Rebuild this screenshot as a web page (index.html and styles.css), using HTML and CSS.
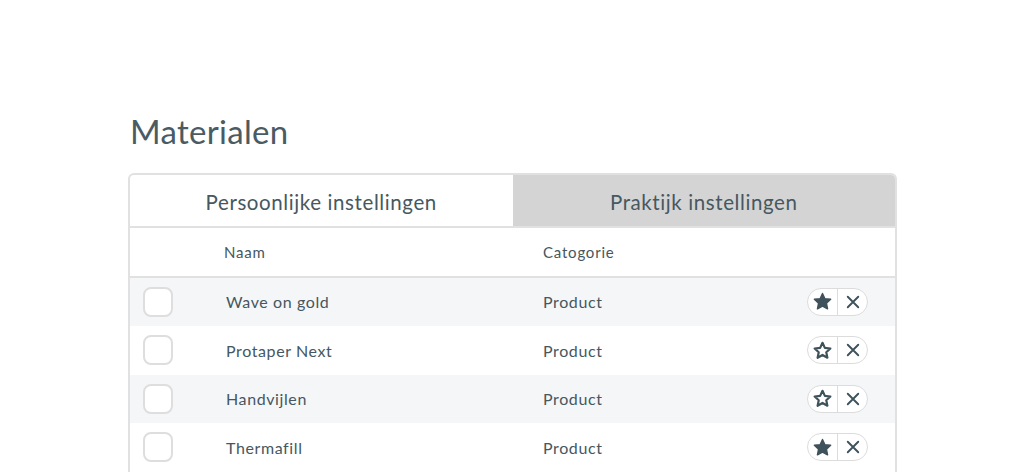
FILE: index.html
```html
<!DOCTYPE html>
<html>
<head>
<meta charset="utf-8">
<link rel="stylesheet" href="styles.css">
</head>
<body>
<div class="page">
  <h1 class="title">Materialen</h1>
  <div class="card">
    <div class="tabs">
      <div class="tab active">Persoonlijke instellingen</div>
      <div class="tab">Praktijk instellingen</div>
    </div>
    <div class="row head">
      <div class="c-check"></div>
      <div class="c-name">Naam</div>
      <div class="c-cat">Catogorie</div>
      <div class="c-act"></div>
    </div>
    <div class="row alt">
      <div class="c-check"><span class="box"></span></div>
      <div class="c-name">Wave on gold</div>
      <div class="c-cat">Product</div>
      <div class="c-act"><div class="btns"><span class="b"><svg viewBox="0 0 24 24" class="star"><path d="M12 2.8l2.8 6 6.5.7-4.8 4.4 1.3 6.5L12 17.2l-5.8 3.2 1.3-6.5-4.8-4.4 6.5-.7z" fill="#3f525c" stroke="#3f525c" stroke-width="1.6" stroke-linejoin="round"/></svg></span><span class="b"><svg viewBox="0 0 24 24" class="x"><path d="M5 5l14 14M19 5L5 19" stroke="#3f525c" stroke-width="2.5" stroke-linecap="round"/></svg></span></div></div>
    </div>
    <div class="row">
      <div class="c-check"><span class="box"></span></div>
      <div class="c-name">Protaper Next</div>
      <div class="c-cat">Product</div>
      <div class="c-act"><div class="btns"><span class="b"><svg viewBox="0 0 24 24" class="star"><path d="M12 3.2l2.7 5.8 6.3.7-4.7 4.3 1.3 6.3L12 17.1l-5.6 3.2 1.3-6.3L3 9.7l6.3-.7z" fill="none" stroke="#3f525c" stroke-width="2.5" stroke-linejoin="round"/></svg></span><span class="b"><svg viewBox="0 0 24 24" class="x"><path d="M5 5l14 14M19 5L5 19" stroke="#3f525c" stroke-width="2.5" stroke-linecap="round"/></svg></span></div></div>
    </div>
    <div class="row alt">
      <div class="c-check"><span class="box"></span></div>
      <div class="c-name">Handvijlen</div>
      <div class="c-cat">Product</div>
      <div class="c-act"><div class="btns"><span class="b"><svg viewBox="0 0 24 24" class="star"><path d="M12 3.2l2.7 5.8 6.3.7-4.7 4.3 1.3 6.3L12 17.1l-5.6 3.2 1.3-6.3L3 9.7l6.3-.7z" fill="none" stroke="#3f525c" stroke-width="2.5" stroke-linejoin="round"/></svg></span><span class="b"><svg viewBox="0 0 24 24" class="x"><path d="M5 5l14 14M19 5L5 19" stroke="#3f525c" stroke-width="2.5" stroke-linecap="round"/></svg></span></div></div>
    </div>
    <div class="row">
      <div class="c-check"><span class="box"></span></div>
      <div class="c-name">Thermafill</div>
      <div class="c-cat">Product</div>
      <div class="c-act"><div class="btns"><span class="b"><svg viewBox="0 0 24 24" class="star"><path d="M12 2.8l2.8 6 6.5.7-4.8 4.4 1.3 6.5L12 17.2l-5.8 3.2 1.3-6.5-4.8-4.4 6.5-.7z" fill="#3f525c" stroke="#3f525c" stroke-width="1.6" stroke-linejoin="round"/></svg></span><span class="b"><svg viewBox="0 0 24 24" class="x"><path d="M5 5l14 14M19 5L5 19" stroke="#3f525c" stroke-width="2.5" stroke-linecap="round"/></svg></span></div></div>
    </div>
  </div>
</div>
</body>
</html>
```
FILE: styles.css
```css
html, body {
  margin: 0;
  padding: 0;
  background: #ffffff;
}
body {
  font-family: "Lato", "Liberation Sans", sans-serif;
  color: #455760;
}
.page {
  width: 769px;
  margin-left: 128px;
  padding-top: 110px;
}
.title {
  margin: 0 0 21px 2px;
  font-size: 33px;
  font-weight: 400;
  letter-spacing: 0.3px;
  line-height: 42px;
  color: #4a5b64;
}
.card {
  border: 2px solid #e1e1e1;
  border-bottom: none;
  border-radius: 6px 6px 0 0;
  overflow: hidden;
  height: 400px;
}
.tabs {
  display: flex;
  height: 51px;
  border-bottom: 2px solid #e1e1e1;
}
.tab {
  flex: 1;
  display: flex;
  align-items: center;
  justify-content: center;
  font-size: 20.5px;
  letter-spacing: 0.6px;
  color: #465860;
  padding-top: 2px;
}
.tab:not(.active) {
  background: #d4d4d4;
}
.row {
  display: flex;
  align-items: center;
  height: 48.5px;
  font-size: 16px;
  letter-spacing: 0.6px;
}
.row.alt {
  background: #f5f6f7;
}
.row.head {
  height: 47.5px;
  border-bottom: 2px solid #e1e1e1;
  font-size: 15px;
  letter-spacing: 0.8px;
}
.c-check {
  width: 94px;
  padding-left: 13px;
  box-sizing: border-box;
  display: flex;
  align-items: center;
}
.c-name {
  width: 319px;
  padding-left: 2px;
  box-sizing: border-box;
}
.head .c-name { padding-left: 0; }
.c-cat {
  flex: 1;
}
.c-act {
  width: 88px;
  display: flex;
  justify-content: flex-start;
}
.box {
  width: 26px;
  height: 26px;
  border: 2px solid #dedede;
  border-radius: 8px;
  background: #fff;
  display: block;
}
.btns {
  display: flex;
  border: 1.5px solid #dcdcdc;
  border-radius: 14px;
  height: 26px;
  background: #fff;
  overflow: hidden;
}
.b {
  width: 29px;
  display: flex;
  align-items: center;
  justify-content: center;
}
.b + .b {
  border-left: 1.5px solid #dcdcdc;
}
.star {
  width: 21px;
  height: 21px;
}
.x {
  width: 18px;
  height: 18px;
}
```
